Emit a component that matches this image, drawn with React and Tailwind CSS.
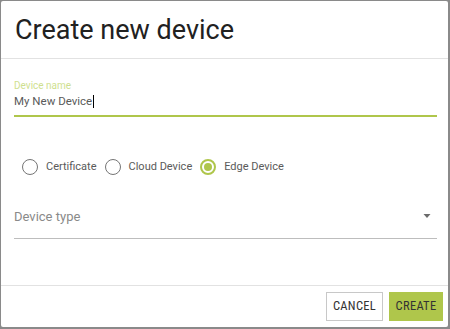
import React from 'react';

const Radio = ({ label, checked }) => (
    <label className="flex items-center gap-[8px] mr-[8px]">
        <span
            className={`w-[16px] h-[16px] rounded-full flex items-center justify-center ${
                checked ? 'border-2 border-[#afc64b]' : 'border-[1.5px] border-[#757575]'
            }`}
        >
            {checked && <span className="w-[8px] h-[8px] rounded-full bg-[#afc64b]" />}
        </span>
        <span className="text-[11px] leading-[16px] text-[#5a5a5a]">{label}</span>
    </label>
);

const App = () => {
    return (
        <div className="w-[450px] h-[329px] bg-[#8a8a8a] pt-px pl-px font-['Roboto',sans-serif]">
            <div className="w-[447px] h-[326px] bg-white rounded-[2px] flex flex-col">
                {/* Header */}
                <div className="h-[58px] pt-[13px] px-[14px] border-b border-[#e2e2e2]">
                    <h1 className="text-[27px] leading-[32px] font-normal text-[#212121]">Create new device</h1>
                </div>

                {/* Body */}
                <div className="flex-1 pl-[13px] pr-[11px] pt-[21px]">
                    <div className="border-b-2 border-[#afc64b] pb-[6px]">
                        <div className="text-[10px] leading-[12px] text-[#cfdf8f]">Device name</div>
                        <div className="mt-px text-[11.5px] leading-[16px] text-[#5a5a5a] flex items-center">
                            My New Device
                            <span className="inline-block w-px h-[13px] bg-black ml-px" />
                        </div>
                    </div>

                    <div className="mt-[40px] h-[20px] flex items-center pl-[8px]">
                        <Radio label="Certificate" />
                        <Radio label="Cloud Device" />
                        <Radio label="Edge Device" checked />
                    </div>

                    <div className="mt-[31px] pb-[12px] border-b border-[#bdbdbd] flex items-center justify-between">
                        <span className="text-[13px] leading-[18px] text-[#8a8a8a]">Device type</span>
                        <svg width="8" height="4" viewBox="0 0 8 4" className="mr-[6px] -mt-[2px]">
                            <path d="M0.5 0 L7.5 0 L4 4 Z" fill="#6b6b6b" />
                        </svg>
                    </div>
                </div>

                {/* Footer */}
                <div className="h-[42px] border-t border-[#e2e2e2] flex items-start justify-end gap-[6px] pt-[6px] pr-[5px]">
                    <button className="h-[29px] w-[57px] border border-[#c8c8c8] bg-white text-[12.5px] tracking-[0.3px] text-[#333] font-['Roboto_Condensed','Liberation_Sans_Narrow','Roboto',sans-serif]">
                        CANCEL
                    </button>
                    <button className="h-[29px] w-[54px] bg-[#afc64b] text-[12.5px] tracking-[0.3px] text-[#333] font-['Roboto_Condensed','Liberation_Sans_Narrow','Roboto',sans-serif]">
                        CREATE
                    </button>
                </div>
            </div>
        </div>
    );
};

export default App;
